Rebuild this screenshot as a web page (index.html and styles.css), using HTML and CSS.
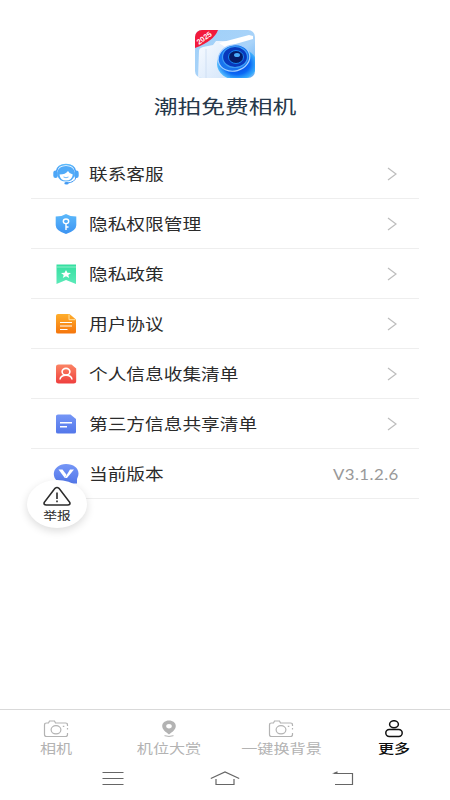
FILE: index.html
```html
<!DOCTYPE html>
<html lang="zh-CN">
<head>
<meta charset="utf-8">
<title>潮拍免费相机</title>
<link rel="stylesheet" href="styles.css">
</head>
<body>
<svg width="0" height="0" class="defs" aria-hidden="true">
  <defs>
    <linearGradient id="blue" x1="0" y1="0" x2="0" y2="1"><stop offset="0" stop-color="#5cb9fb"/><stop offset="1" stop-color="#3c93f2"/></linearGradient>
    <linearGradient id="green" x1="0" y1="0" x2="0" y2="1"><stop offset="0" stop-color="#35dfa0"/><stop offset="1" stop-color="#5ceab9"/></linearGradient>
    <linearGradient id="orange" x1="0" y1="0" x2="0" y2="1"><stop offset="0" stop-color="#ffae2b"/><stop offset="1" stop-color="#f5750c"/></linearGradient>
    <linearGradient id="red" x1="0" y1="0" x2="0" y2="1"><stop offset="0" stop-color="#fb8464"/><stop offset="1" stop-color="#ef3f3e"/></linearGradient>
    <linearGradient id="indigo" x1="0" y1="0" x2="0" y2="1"><stop offset="0" stop-color="#7596f6"/><stop offset="1" stop-color="#5377ea"/></linearGradient>
    <symbol id="arrow" viewBox="0 0 10 14"><path d="M1 1l8 6-8 6" fill="none" stroke="#bdbdbd" stroke-width="1.2"/></symbol>
    <symbol id="camera" viewBox="0 0 26 18"><path d="M24.500 6V5q0-2-2-2H12.500L11.500 1H6.500L5.500 3H3.500Q1.500 3 1.500 5v9.500q0 2 2 2h19q2 0 2-2V13" fill="none" stroke="currentColor" stroke-width="1.200"/><ellipse cx="13" cy="9.800" rx="4.900" ry="4.100" fill="none" stroke="currentColor" stroke-width="1.200"/><path d="M19.800 6.300h1.500M24.500 8v1.500" stroke="currentColor" stroke-width="1.200"/></symbol>
  </defs>
</svg>
<div class="screen">
  <header class="brand">
    <svg class="logo" viewBox="0 0 60 48">
      <defs>
        <linearGradient id="sky" x1="0" y1="0" x2="1" y2="1"><stop offset="0" stop-color="#9fd0f8"/><stop offset=".6" stop-color="#a9d3f9"/><stop offset="1" stop-color="#56a8f6"/></linearGradient>
        <linearGradient id="body" x1="0" y1="0" x2="1" y2="1"><stop offset="0" stop-color="#f8fbff"/><stop offset="1" stop-color="#d3e5fa"/></linearGradient>
        <radialGradient id="glow"><stop offset="0" stop-color="#0636df"/><stop offset=".65" stop-color="#0a68f4"/><stop offset="1" stop-color="#2aaeff" stop-opacity=".75"/></radialGradient>
        <clipPath id="round"><rect width="60" height="48" rx="7"/></clipPath>
      </defs>
      <g clip-path="url(#round)">
        <rect width="60" height="48" fill="url(#sky)"/>
        <path d="M4 21q0-3 4-4l10-2 3-4h10l4 3v34H3z" fill="url(#body)"/>
        <path d="M24 13l30-8 4 1v3L30 17z" fill="#fff"/>
        <path d="M11 19v29" stroke="#d0e0f4" stroke-width="1"/>
        <ellipse cx="42" cy="34" rx="20" ry="16" fill="url(#glow)"/>
        <ellipse cx="39" cy="28" rx="16" ry="13" fill="#1974ef" stroke="#a8d2ff" stroke-width="1.200" transform="rotate(-15 39 28)"/>
        <ellipse cx="40" cy="27" rx="12.500" ry="10.500" fill="#0838bc" stroke="#3c9df6" stroke-width="1.200"/>
        <ellipse cx="41" cy="27" rx="7.500" ry="6.500" fill="#061b67" stroke="#1687f5"/>
        <ellipse cx="42" cy="25" rx="3" ry="2" fill="#4aaafb"/>
        <path d="M0 0h23Q19 11 0 18z" fill="#f21a3c"/>
        <text x="4" y="15" transform="rotate(-36 4 15)" class="logo-year">2025</text>
      </g>
    </svg>
    <h1 class="brand-name">潮拍免费相机</h1>
  </header>

  <main class="menu">
    <div class="row">
      <svg class="row-icon" viewBox="0 0 26 22"><path d="M3.500 8.500Q4.500 1.500 13 1.500t9.500 7" fill="none" stroke="url(#blue)" stroke-width="1.500"/><path d="M4.500 9.500Q5 3 13 3t8.500 6.500V13q-2 5.500-8.500 5.500T4.500 13z" fill="#50aaf8"/><path d="M6.500 11.500q6 0 8.500-3.500 1 2.500 4.800 3.500-.8 6-6.800 6t-6.500-6z" fill="#fff"/><path d="M10.500 14q2.500 1.500 5 0" fill="none" stroke="#50aaf8" stroke-width=".8"/><rect x=".3" y="7.500" width="4.500" height="7.500" rx="2.200" fill="#4ca6f7"/><rect x="21.200" y="7.500" width="4.500" height="7.500" rx="2.200" fill="#4ca6f7"/><path d="M23 14q-1 5.500-9 6" fill="none" stroke="#4199f3"/><ellipse cx="13.500" cy="20.200" rx="2.200" ry="1.300" fill="#4199f3"/></svg>
      <span class="label">联系客服</span><svg class="arrow"><use href="#arrow"/></svg>
    </div>
    <div class="row">
      <svg class="row-icon" viewBox="0 0 26 22"><path d="M13 1q4 2.500 10.300 2.600v8.700q0 5.500-10.300 8.700-10.300-3.200-10.300-8.700V3.600Q9 3.500 13 1z" fill="url(#blue)"/><ellipse cx="13" cy="8.300" rx="2.700" ry="2.300" fill="none" stroke="#fff" stroke-width="1.400"/><path d="M13 10.500v6.500M13 14h2.500" stroke="#fff" stroke-width="1.400"/></svg>
      <span class="label">隐私权限管理</span><svg class="arrow"><use href="#arrow"/></svg>
    </div>
    <div class="row">
      <svg class="row-icon" viewBox="0 0 26 22"><path d="M3.500 1.500h19.500v19.500L13 17l-9.500 4z" fill="url(#green)"/><path d="M3.500 4h19.500" stroke="#a4f3d5" stroke-width=".8"/><path d="M13 7l1.400 2.700 3.600.2-2.700 2 .9 3-3.200-1.700-3.200 1.700.9-3-2.700-2 3.600-.2z" fill="#fff"/></svg>
      <span class="label">隐私政策</span><svg class="arrow"><use href="#arrow"/></svg>
    </div>
    <div class="row">
      <svg class="row-icon" viewBox="0 0 26 22"><path d="M5 1h11.500l6.500 5.500v12.500q0 1.500-2 1.500H5q-2 0-2-1.500V2.500Q3 1 5 1z" fill="url(#orange)"/><path d="M16 1.500v5.200h6.500" fill="none" stroke="#ffe0a0"/><path d="M7 9.500h12M7 13h12M7 16.500h7.500" stroke="#fff" stroke-width="1.200"/></svg>
      <span class="label">用户协议</span><svg class="arrow"><use href="#arrow"/></svg>
    </div>
    <div class="row">
      <svg class="row-icon" viewBox="0 0 26 22"><path d="M5.500 1.500h13L23.200 5.500v13q0 2-2.500 2h-15.200q-2.500 0-2.500-2v-15q0-2 2.500-2z" fill="url(#red)"/><ellipse cx="13" cy="8.700" rx="3.900" ry="3.300" fill="none" stroke="#fff" stroke-width="1.600"/><path d="M7 16.500q.5-4.300 6-4.300t6 4.300" fill="none" stroke="#fff" stroke-width="1.600"/></svg>
      <span class="label">个人信息收集清单</span><svg class="arrow"><use href="#arrow"/></svg>
    </div>
    <div class="row">
      <svg class="row-icon" viewBox="0 0 26 22"><path d="M5 1.500h12.500L23 6v13q0 1.500-2 1.500H5q-2 0-2-1.500V3q0-1.500 2-1.500z" fill="url(#indigo)"/><path d="M7 9.800h12M7 13.700h7" stroke="#fff" stroke-width="1.500"/></svg>
      <span class="label">第三方信息共享清单</span><svg class="arrow"><use href="#arrow"/></svg>
    </div>
    <div class="row">
      <svg class="row-icon" viewBox="0 0 26 22"><path d="M13 1c7.500 0 12.500 4 12.500 9.500 0 3-1.500 4.500-1.500 6v4h-6q-2 .5-5 .5C6 21 .8 16.500.8 11S6 1 13 1z" fill="url(#indigo)"/><path d="M5.500 6.500h4l4 5.200-1.700 3.300z" fill="#fff"/><path d="M11.800 15L17 6.500h4L14 15z" fill="#fff"/></svg>
      <span class="label">当前版本</span><span class="version">V3.1.2.6</span>
    </div>
  </main>

  <nav class="tabs">
    <div class="tab"><svg class="tab-icon"><use href="#camera"/></svg><span class="tab-label">相机</span></div>
    <div class="tab"><svg class="tab-icon" viewBox="0 0 26 18"><path fill-rule="evenodd" d="M13 .5c4 0 6.800 2.300 6.800 5.600 0 3.500-3.500 6-6.800 8.500-3.300-2.500-6.800-5-6.800-8.500C6.200 2.800 9 .5 13 .5zm0 3.500c-1.700 0-2.800.9-2.800 2.200s1.100 2.200 2.800 2.200 2.800-.9 2.800-2.200-1.100-2.200-2.800-2.200z" fill="currentColor"/><path d="M8.500 15.700q4.500 1.500 9 0" fill="none" stroke="currentColor"/></svg><span class="tab-label">机位大赏</span></div>
    <div class="tab"><svg class="tab-icon"><use href="#camera"/></svg><span class="tab-label">一键换背景</span></div>
    <div class="tab active"><svg class="tab-icon" viewBox="0 0 26 18"><ellipse cx="13" cy="4.200" rx="4.400" ry="3.500" fill="none" stroke="currentColor" stroke-width="1.500"/><rect x="4.800" y="9.600" width="16.400" height="6.900" rx="3.400" fill="none" stroke="currentColor" stroke-width="1.500"/></svg><span class="tab-label">更多</span></div>
  </nav>
  <footer class="system">
    <svg class="sys-icon" viewBox="0 0 30 16"><path d="M4.500 1.500h21M4.500 7.500h21M4.500 13.500h21"/></svg>
    <svg class="sys-icon" viewBox="0 0 30 16"><path d="M.8 7.500L15 1l14.200 6.500M6 8v5.500h18V8"/></svg>
    <svg class="sys-icon" viewBox="0 0 30 16"><path d="M6 2.500h18.500v11H7"/><path d="M4 2.500L9.500.3v2.700z" fill="#666" stroke="none"/></svg>
  </footer>

  <div class="report">
    <svg class="report-icon" viewBox="0 0 30 21"><path d="M13 2.300q2-1.500 4 0l10.700 14q1 2.700-2 2.700H4.300q-3 0-2-2.700z"/><path d="M15 6.500v6.500M15 14.500v1.800"/></svg>
    <span class="report-label">举报</span>
  </div>
</div>
</body>
</html>
```
FILE: styles.css
```css
* { box-sizing: border-box; }
body {
  margin: 0;
  background: #fff;
  color: #2b2b2b;
  font-family: "Noto Sans CJK SC", sans-serif;
}
.defs { position: absolute; }
.screen {
  position: relative;
  display: flex;
  flex-direction: column;
  width: 450px;
  height: 800px;
  overflow: hidden;
}
.brand {
  display: flex;
  flex-direction: column;
  align-items: center;
  height: 149px;
  padding-top: 30px;
}
.logo { width: 60px; height: 48px; }
.logo-year { font: bold 7.5px "Liberation Sans", sans-serif; fill: #fff; }
.brand-name {
  margin: 14px 0 0;
  font-size: 19px;
  line-height: 28px;
  font-weight: 400;
  color: #26384a;
  transform: scaleX(1.25);
}
.menu { padding: 0 31px; }
.row {
  display: flex;
  align-items: center;
  height: 50px;
  padding: 0 20px 0 22px;
  border-bottom: 1px solid #eee;
}
.row-icon { width: 26px; height: 22px; margin-right: 10px; }
.label {
  padding-bottom: 2px;
  font-size: 15.5px;
  line-height: 24px;
  transform: scaleX(1.205);
  transform-origin: left;
  white-space: nowrap;
}
.arrow { width: 10px; height: 14px; margin-left: auto; margin-right: 2px; }
.version {
  margin-left: auto;
  font: 15px/20px Lato, sans-serif;
  letter-spacing: .4px;
  color: #999;
  transform: scaleX(1.12);
  transform-origin: right;
}
.tabs {
  display: flex;
  height: 51px;
  margin-top: auto;
  border-top: 1px solid #d9d9d9;
}
.tab {
  flex: 1;
  display: flex;
  flex-direction: column;
  align-items: center;
  padding-top: 10px;
  color: #b3b3b3;
}
.tab.active { color: #111; }
.tab-icon { width: 26px; height: 18px; }
.tab-label {
  font-size: 13px;
  line-height: 20px;
  white-space: nowrap;
  transform: scaleX(1.24);
}
.active .tab-label { font-weight: 500; }
.system {
  display: flex;
  gap: 82px;
  height: 40px;
  padding: 11px 0 0 98px;
}
.sys-icon { width: 30px; height: 16px; fill: none; stroke: #666; stroke-width: 1.2; }
.sys-icon:last-child { margin-left: 6px; }
.report {
  position: absolute;
  left: 27px;
  top: 480px;
  display: flex;
  flex-direction: column;
  align-items: center;
  width: 60px;
  height: 48px;
  padding-top: 6px;
  border-radius: 50%;
  background: #fff;
  box-shadow: 0 3px 9px rgba(0, 0, 0, .14);
}
.report-icon {
  width: 30px;
  height: 21px;
  fill: none;
  stroke: #2b2b2b;
  stroke-width: 1.6;
}
.report-label {
  font-size: 11px;
  line-height: 16px;
  transform: scaleX(1.25);
}
```
